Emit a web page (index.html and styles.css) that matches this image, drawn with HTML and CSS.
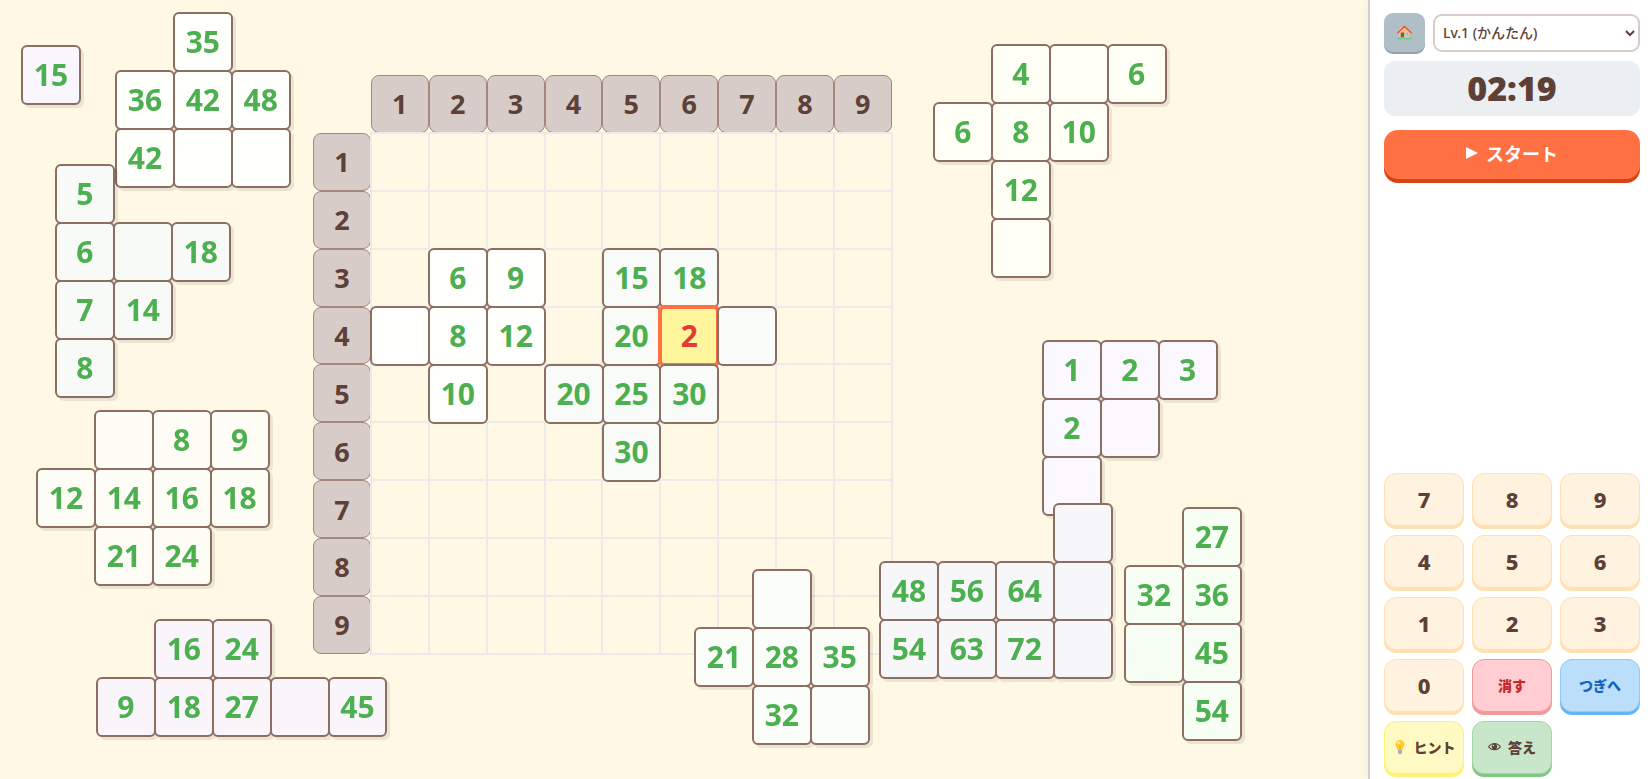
FILE: index.html
```
<!DOCTYPE html>
<html lang="ja">
<head>
  <meta charset="UTF-8">
  <meta name="viewport" content="width=device-width, initial-scale=1.0">
  <title>九九パズル</title>
  <link rel="stylesheet" href="styles.css">
</head>
<body>
  <main class="play-area" id="play-area">
    <div class="board" id="board"></div>
  </main>

  <aside class="sidebar">
    <div class="top-row">
      <button class="home-btn" aria-label="ホーム">
        <svg viewBox="0 0 16 16" width="15" height="15">
          <rect x="0.5" y="13" width="15" height="2.4" rx="1" fill="#66d19e"/>
          <path d="M2.5 7.5 8 2.500l5.500 5V13h-11z" fill="#f9c784"/>
          <path d="M3 2.500h2v3.500H3z" fill="#f9c784"/>
          <rect x="4" y="8" width="3.6" height="5" fill="#7b5a52"/>
          <rect x="9.2" y="8" width="3" height="3" fill="#81c7f5"/>
          <path d="M1 8.2 8 1.6l7 6.6" fill="none" stroke="#f4483b" stroke-width="1.5" stroke-linecap="round"/>
        </svg>
      </button>
      <select class="level" aria-label="レベル">
        <option>Lv.1 (かんたん)</option>
      </select>
    </div>
    <div class="timer">02:19</div>
    <button class="start-btn">
      <svg viewBox="0 0 12 12" width="12" height="12"><path d="M0 0 12 6 0 12z" fill="#fff"/></svg>
      スタート
    </button>

    <div class="keypad">
      <button class="key">7</button>
      <button class="key">8</button>
      <button class="key">9</button>
      <button class="key">4</button>
      <button class="key">5</button>
      <button class="key">6</button>
      <button class="key">1</button>
      <button class="key">2</button>
      <button class="key">3</button>
      <button class="key">0</button>
      <button class="key word clear">消す</button>
      <button class="key word next">つぎへ</button>
      <button class="key word hint">
        <svg viewBox="0 0 14 16" width="14" height="16">
          <path d="M7 1a4.6 4.6 0 0 1 4.6 4.6c0 2-1.6 2.9-2.2 5.4H4.6C4 8.5 2.4 7.6 2.4 5.6A4.6 4.6 0 0 1 7 1z" fill="#fdd02f"/>
          <path d="M5.6 6.5 7 8l1.4-1.5M7 8v3" fill="none" stroke="#f59f00" stroke-width="0.8"/>
          <ellipse cx="5.6" cy="3.8" rx="1.2" ry="1.5" fill="#fff1a8"/>
          <path d="M5 11h4v3l-1 1H6l-1-1z" fill="#a9b0b5"/>
        </svg>
        ヒント
      </button>
      <button class="key word answer">
        <svg viewBox="0 0 14 10" width="13" height="9">
          <path d="M0.5 5.5C3.5 0.5 10.5 0.5 13.5 5.5 10.5 9.5 3.5 9.5 0.5 5.5z" fill="#c8e6c9" stroke="#5d4037" stroke-width="1.2"/>
          <circle cx="7" cy="5" r="3" fill="#5d4037"/>
          <circle cx="6" cy="4" r="0.8" fill="#fff"/>
        </svg>
        答え
      </button>
    </div>
  </aside>

  <script src="app.js"></script>
</body>
</html>
```
FILE: styles.css
```
* {
  box-sizing: border-box;
}
body {
  --cell: calc(521px / 9);
  margin: 0;
  min-height: 100vh;
  display: flex;
  font-family: 'Noto Sans', 'Noto Sans CJK JP', sans-serif;
  color: #5d4037;
  background-color: #fff8e5;
}
button,
select {
  font-family: inherit;
  color: inherit;
  cursor: pointer;
}

/* play area */
.play-area {
  position: relative;
  flex: 1;
  min-width: 0;
  overflow: hidden;
}
.board {
  display: grid;
  grid-template-columns: repeat(10, var(--cell));
  grid-auto-rows: var(--cell);
  margin: 75px 0 0 313px;
}
.head,
.slot,
.tile {
  display: flex;
  align-items: center;
  justify-content: center;
  line-height: 1;
}
.head {
  background-color: #d7ccc8;
  border: 1px solid #a1887f;
  border-radius: 8px;
  font-size: 27px;
  font-weight: 700;
}
.slot {
  position: relative;
  margin: -1px;
  border: 2px solid #eeeaea;
}
.piece {
  position: absolute;
  display: grid;
  grid-auto-columns: var(--cell);
  grid-auto-rows: var(--cell);
  filter: drop-shadow(3px 3px 0 rgba(0, 0, 0, 0.08));
}
.piece.placed {
  filter: none;
}
.tile {
  margin: -1px;
  background-color: var(--fill);
  border: 2px solid #8d6e63;
  border-radius: 6px;
  color: #4caf50;
  font-size: 30px;
  font-weight: 700;
}
.tile.selected {
  margin: -2px;
  background-color: #fff59d;
  border: 4px solid #ff7043;
  color: #e53935;
}

/* sidebar */
.sidebar {
  width: 283px;
  display: flex;
  flex-direction: column;
  padding: 13px 11px 5px 14px;
  background-color: #fff;
  border-left: 2px solid #d7ccc8;
  box-shadow: -2px 0 8px rgba(0, 0, 0, 0.04);
}
.top-row {
  display: flex;
  align-items: center;
  gap: 8px;
  margin-bottom: 9px;
}
.home-btn {
  display: flex;
  align-items: center;
  justify-content: center;
  width: 41px;
  height: 39px;
  padding: 0;
  background-color: #b0bec5;
  border: none;
  border-radius: 9px;
  box-shadow: 0 2px 0 #90a4ae;
}
.level {
  flex: 1;
  height: 38px;
  padding: 0 4px;
  background-color: #fff;
  border: 2px solid #d7ccc8;
  border-radius: 9px;
  font-size: 14px;
  font-weight: 500;
}
.timer {
  margin-bottom: 14px;
  background-color: #eceff1;
  border-radius: 11px;
  text-align: center;
  font-size: 34px;
  font-weight: 900;
  line-height: 55px;
}
.start-btn {
  display: flex;
  align-items: center;
  justify-content: center;
  gap: 8px;
  height: 49px;
  padding: 0 0 4px;
  background-color: #ff7043;
  border: none;
  border-radius: 14px;
  box-shadow: 0 4px 0 #d84315;
  color: #fff;
  font-size: 18px;
  font-weight: 700;
}
.keypad {
  display: grid;
  grid-template-columns: repeat(3, 1fr);
  gap: 9px 8px;
  margin-top: auto;
}
.key {
  display: flex;
  align-items: center;
  justify-content: center;
  gap: 7px;
  height: 53px;
  padding: 0 0 2px;
  background-color: #fff3e0;
  border: 1px solid #ffe0b2;
  border-radius: 12px;
  box-shadow: 0 3px 0 #ffe0b2;
  font-size: 22px;
  font-weight: 800;
}
.key.word {
  font-size: 14px;
}
.key.clear {
  background-color: #ffcdd2;
  border-color: #ef9a9a;
  box-shadow: 0 3px 0 #ef9a9a;
  color: #c62828;
}
.key.next {
  background-color: #bbdefb;
  border-color: #90caf9;
  box-shadow: 0 3px 0 #64b5f6;
  color: #1565c0;
}
.key.hint {
  background-color: #fff9c4;
  border-color: #fff176;
  box-shadow: 0 3px 0 #fff176;
}
.key.answer {
  background-color: #c8e6c9;
  border-color: #a5d6a7;
  box-shadow: 0 3px 0 #81c784;
}
```
FILE: app.js
```
const area = document.getElementById('play-area');
const board = document.getElementById('board');

// '.' = no tile, '_' = blank tile, '*' = selected tile
const pieces = [
  { x: 371, y: 249, fill: '#fefefd', placed: true, rows: ['. 6 9', '_ 8 12', '. 10 .'] },
  { x: 371, y: 249, fill: '#f9fbf8', placed: true, col: 4, rows: ['. 15 18 .', '. 20 *2 _', '20 25 30 .', '. 30 . .'] },
  { x: 22, y: 46, fill: '#f9f6fd', rows: ['15'] },
  { x: 116, y: 13, fill: '#fffffc', rows: ['. 35 .', '36 42 48', '42 _ _'] },
  { x: 56, y: 165, fill: '#f8faf8', rows: ['5 . .', '6 _ 18', '7 14 .', '8 . .'] },
  { x: 37, y: 411, fill: '#fdfdf5', rows: ['. _ 8 9', '12 14 16 18', '. 21 24 .'] },
  { x: 97, y: 620, fill: '#f9f5fb', rows: ['. 16 24 . .', '9 18 27 _ 45'] },
  { x: 695, y: 570, fill: '#fbfdf8', rows: ['. _ .', '21 28 35', '. 32 _'] },
  { x: 934, y: 45, fill: '#fffff6', rows: ['. 4 _ 6', '6 8 10 .', '. 12 . .', '. _ . .'] },
  { x: 1043, y: 341, fill: '#fbf8ff', rows: ['1 2 3', '2 _ .', '_ . .'] },
  { x: 880, y: 504, fill: '#f7f6f9', rows: ['. . . _', '48 56 64 _', '54 63 72 _'] },
  { x: 1125, y: 508, fill: '#f7fff4', rows: ['. 27', '32 36', '_ 45', '. 54'] },
];

function place(el, col, row) {
  el.style.gridColumn = col;
  el.style.gridRow = row;
}

function drawBoard() {
  for (let row = 0; row < 10; row++) {
    for (let col = 0; col < 10; col++) {
      if (row === 0 && col === 0) continue;
      const el = document.createElement('div');
      const isHead = row === 0 || col === 0;
      el.className = isHead ? 'head' : 'slot';
      if (isHead) el.textContent = row || col;
      place(el, col + 1, row + 1);
      board.appendChild(el);
    }
  }
}

function drawPiece(p) {
  const div = document.createElement('div');
  div.className = p.placed ? 'piece placed' : 'piece';
  div.style.left = `calc(${p.x}px + var(--cell) * ${(p.col || 1) - 1})`;
  div.style.top = p.y + 'px';
  div.style.setProperty('--fill', p.fill);

  p.rows.forEach((line, r) => {
    line.split(' ').forEach((value, c) => {
      if (value === '.') return;
      const tile = document.createElement('div');
      tile.className = value.startsWith('*') ? 'tile selected' : 'tile';
      tile.textContent = value.replace(/[_*]/, '');
      place(tile, c + 1, r + 1);
      div.appendChild(tile);
    });
  });
  area.appendChild(div);
}

drawBoard();
pieces.forEach(drawPiece);
```
